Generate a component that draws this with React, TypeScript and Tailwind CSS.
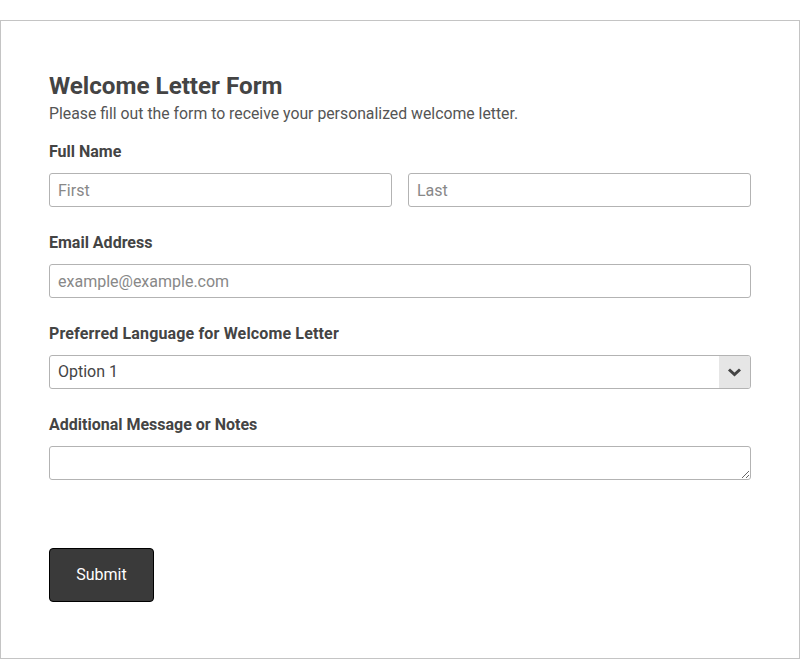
import React from "react";

export default function App() {
  const font = { fontFamily: "Roboto, 'Liberation Sans', sans-serif" };
  return (
    <div className="w-[800px] h-[659px] bg-white pt-[20px]" style={font}>
      <div className="border border-[#c4c4c4] border-b h-[639px] px-[48px] pt-[51px] text-[#444]">
        <h1 className="text-[24.2px] leading-[28px] font-bold text-[#444]">Welcome Letter Form</h1>
        <p className="text-[15.8px] leading-[24px] text-[#555] mt-[2px]">
          Please fill out the form to receive your personalized welcome letter.
        </p>

        <div className="mt-[14px]">
          <div className="text-[16px] leading-[24px] font-bold">Full Name</div>
          <div className="flex gap-[16px] mt-[9px]">
            <input
              placeholder="First"
              className="flex-1 min-w-0 h-[34px] border border-[#b3b3b3] rounded-[3px] px-[8px] text-[16px] placeholder:text-[#888] outline-none"
            />
            <input
              placeholder="Last"
              className="flex-1 min-w-0 h-[34px] border border-[#b3b3b3] rounded-[3px] px-[8px] text-[16px] placeholder:text-[#888] outline-none"
            />
          </div>
        </div>

        <div className="mt-[24px]">
          <div className="text-[16px] leading-[24px] font-bold">Email Address</div>
          <input
            placeholder="example@example.com"
            className="mt-[9px] w-full h-[34px] border border-[#b3b3b3] rounded-[3px] px-[8px] text-[16px] placeholder:text-[#888] outline-none"
          />
        </div>

        <div className="mt-[24px]">
          <div className="text-[16px] leading-[24px] font-bold tracking-[0.15px]">Preferred Language for Welcome Letter</div>
          <div className="mt-[9px] w-full h-[34px] border border-[#b3b3b3] rounded-[3px] flex items-stretch overflow-hidden">
            <div className="flex-1 flex items-center px-[8px] text-[16px] text-[#444]">Option 1</div>
            <div className="w-[31px] bg-[#e6e6e6] flex items-center justify-center">
              <svg width="15" height="10" viewBox="0 0 15 10">
                <polyline points="2,2.5 7.5,7.5 13,2.5" fill="none" stroke="#444" strokeWidth="3" strokeLinecap="butt" strokeLinejoin="miter" />
              </svg>
            </div>
          </div>
        </div>

        <div className="mt-[24px]">
          <div className="text-[16px] leading-[24px] font-bold">Additional Message or Notes</div>
          <textarea
            rows={1}
            className="block mt-[9px] w-full h-[34px] border border-[#b3b3b3] rounded-[3px] px-[8px] text-[16px] outline-none resize-y"
          />
        </div>

        <button className="mt-[68px] w-[105px] h-[54px] bg-[#3a3a3a] border border-black rounded-[4px] text-white text-[16px]">
          Submit
        </button>
      </div>
    </div>
  );
}
